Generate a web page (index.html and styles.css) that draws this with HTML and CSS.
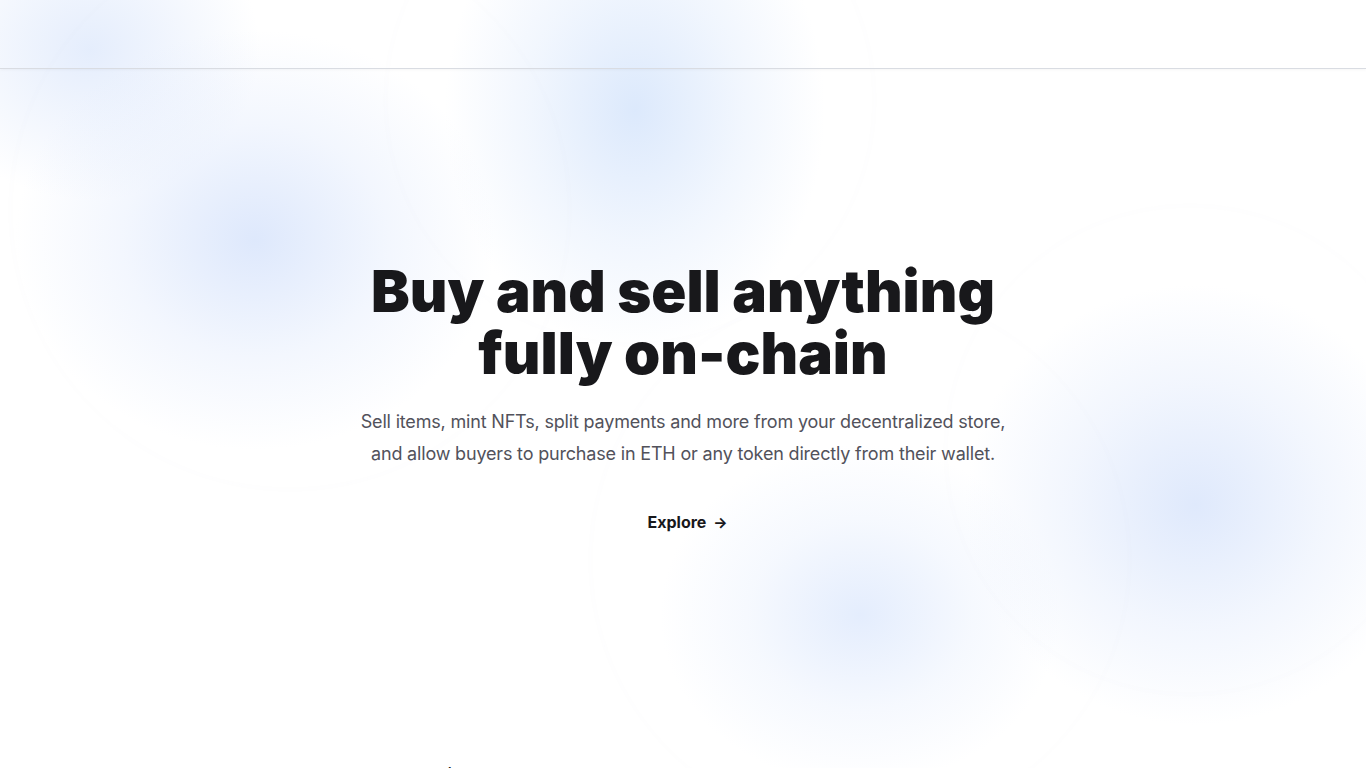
FILE: index.html
```html
<!DOCTYPE html>
<html lang="en">
<head>
    <meta charset="UTF-8">
    <title>Buy and sell anything fully on-chain</title>
    <link rel="stylesheet" href="styles.css">
</head>
<body>
    <div class="backdrop">
        <span class="ring ring-left"></span>
        <span class="ring ring-top"></span>
        <span class="ring ring-right"></span>
        <span class="ring ring-bottom"></span>
    </div>

    <header class="topbar"></header>

    <main>
        <section class="hero">
            <h1>Buy and sell anything<br>fully on-chain</h1>
            <p class="lead">
                Sell items, mint NFTs, split payments and more from your decentralized store,<br>
                and allow buyers to purchase in ETH or any token directly from their wallet.
            </p>
            <a class="explore" href="#">Explore <span class="arrow">&rarr;</span></a>
        </section>

        <section class="next">
            <h2>Trending</h2>
        </section>
    </main>
</body>
</html>
```

FILE: styles.css
```css
* {
    margin: 0;
    padding: 0;
    box-sizing: border-box;
}

html,
body {
    height: 100%;
}

body {
    font-family: Inter, "Noto Sans", sans-serif;
    background: #ffffff;
    color: #18181b;
    overflow: hidden;
    position: relative;
}

/* soft blue glow behind the hero */
.backdrop {
    position: absolute;
    top: 0;
    left: 0;
    width: 100%;
    height: 100%;
    overflow: hidden;
    z-index: 0;
    pointer-events: none;
    background:
        radial-gradient(ellipse 240px 210px at 255px 240px, rgba(220, 231, 252, 0.95), rgba(220, 231, 252, 0.35) 55%, rgba(220, 231, 252, 0)),
        radial-gradient(ellipse 190px 240px at 635px 110px, rgba(220, 233, 252, 1), rgba(220, 233, 252, 0.4) 55%, rgba(220, 233, 252, 0)),
        radial-gradient(ellipse 170px 150px at 90px 50px, rgba(224, 234, 252, 0.85), rgba(224, 234, 252, 0)),
        radial-gradient(ellipse 230px 220px at 1195px 505px, rgba(223, 233, 252, 1), rgba(223, 233, 252, 0.4) 55%, rgba(223, 233, 252, 0)),
        radial-gradient(ellipse 200px 170px at 860px 615px, rgba(228, 237, 253, 1), rgba(228, 237, 253, 0.35) 55%, rgba(228, 237, 253, 0));
}

.ring {
    position: absolute;
    border-radius: 50%;
    border: 1px solid rgba(40, 60, 110, 0.022);
    filter: blur(1.5px);
}

.ring-left {
    left: 10px;
    top: -70px;
    width: 560px;
    height: 560px;
}

.ring-top {
    left: 385px;
    top: -145px;
    width: 490px;
    height: 490px;
}

.ring-right {
    left: 945px;
    top: 205px;
    width: 490px;
    height: 490px;
}

.ring-bottom {
    left: 590px;
    top: 290px;
    width: 540px;
    height: 540px;
}

.topbar {
    position: relative;
    z-index: 1;
    height: 69px;
    border-bottom: 1px solid #d9dce2;
    box-shadow: 0 1px 3px rgba(0, 0, 0, 0.04);
}

main {
    position: relative;
    z-index: 1;
}

.hero {
    display: flex;
    flex-direction: column;
    align-items: center;
    text-align: center;
    padding-top: 191px;
}

h1 {
    font-size: 58px;
    font-weight: 900;
    line-height: 62px;
    letter-spacing: 0;
    color: #18181b;
}

.lead {
    margin-top: 22px;
    font-size: 18px;
    line-height: 32px;
    color: #52525b;
    letter-spacing: -0.01em;
}

.explore {
    margin-top: 40px;
    margin-left: 9px;
    font-size: 16px;
    font-weight: 700;
    line-height: 24px;
    color: #18181b;
    text-decoration: none;
}

.arrow {
    font-size: 15px;
    margin-left: 3px;
}

.next {
    max-width: 544px;
    margin: 0 auto;
    padding-top: 230px;
}

h2 {
    font-size: 13px;
    font-weight: 700;
    color: #18181b;
}
```
